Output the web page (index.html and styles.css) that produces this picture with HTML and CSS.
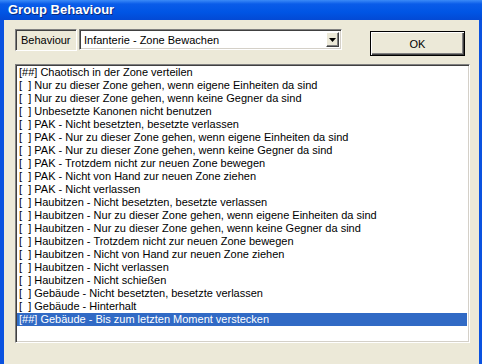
FILE: index.html
```html
<!DOCTYPE html>
<html lang="de">
<head>
  <meta charset="UTF-8">
  <meta name="viewport" content="width=device-width, initial-scale=1.0">
  <title>Group Behaviour</title>
  <link rel="stylesheet" href="styles.css">
</head>
<body>
  <div class="window">
    <div class="titlebar">Group Behaviour</div>
    <div class="client">
      <!-- Auswahl oben -->
      <div class="toprow">
        <span class="label">Behaviour</span>
        <div class="combo">
          <span class="combo-text">Infanterie - Zone Bewachen</span>
          <span class="drop">
            <svg width="7" height="4" viewBox="0 0 7 4"><path d="M0 0h7L3.5 4z" fill="#000"/></svg>
          </span>
        </div>
        <button type="button" class="ok">OK</button>
      </div>

      <!-- Liste der Verhalten -->
      <ul class="list">
        <li>[##] Chaotisch in der Zone verteilen</li>
        <li>[  ] Nur zu dieser Zone gehen, wenn eigene Einheiten da sind</li>
        <li>[  ] Nur zu dieser Zone gehen, wenn keine Gegner da sind</li>
        <li>[  ] Unbesetzte Kanonen nicht benutzen</li>
        <li>[  ] PAK - Nicht besetzten, besetzte verlassen</li>
        <li>[  ] PAK - Nur zu dieser Zone gehen, wenn eigene Einheiten da sind</li>
        <li>[  ] PAK - Nur zu dieser Zone gehen, wenn keine Gegner da sind</li>
        <li>[  ] PAK - Trotzdem nicht zur neuen Zone bewegen</li>
        <li>[  ] PAK - Nicht von Hand zur neuen Zone ziehen</li>
        <li>[  ] PAK - Nicht verlassen</li>
        <li>[  ] Haubitzen - Nicht besetzten, besetzte verlassen</li>
        <li>[  ] Haubitzen - Nur zu dieser Zone gehen, wenn eigene Einheiten da sind</li>
        <li>[  ] Haubitzen - Nur zu dieser Zone gehen, wenn keine Gegner da sind</li>
        <li>[  ] Haubitzen - Trotzdem nicht zur neuen Zone bewegen</li>
        <li>[  ] Haubitzen - Nicht von Hand zur neuen Zone ziehen</li>
        <li>[  ] Haubitzen - Nicht verlassen</li>
        <li>[  ] Haubitzen - Nicht schießen</li>
        <li>[  ] Gebäude - Nicht besetzten, besetzte verlassen</li>
        <li>[  ] Gebäude - Hinterhalt</li>
        <li class="selected">[##] Gebäude - Bis zum letzten Moment verstecken</li>
      </ul>
    </div>
  </div>
</body>
</html>
```

FILE: styles.css
```css
body { margin: 0; font-family: "Liberation Sans", Arial, sans-serif; font-size: 11px; }

.window {
  width: 482px;
  height: 364px;
  background: #0a52e0;
  padding: 0 3px;
  box-sizing: border-box;
  overflow: hidden;
}

.titlebar {
  height: 20px;
  margin: 0 -3px;
  padding-left: 8px;
  color: #fff;
  font-weight: bold;
  font-size: 13px;
  line-height: 19px;
  background: linear-gradient(#3b8af7 0, #0a5ce9 4px, #0055e5 60%, #0349d4 100%);
  text-shadow: 1px 1px 0 #0a2a80;
}

.client {
  background: #ece9d8;
  height: 344px;
  padding: 9px 0 0 11px;
  box-sizing: border-box;
  margin-left: 1px;
}

.toprow { display: flex; align-items: flex-start; height: 35px; }

.label {
  height: 22px;
  width: 62px;
  box-sizing: border-box;
  border: 1px solid;
  border-color: #808080 #fff #fff #808080;
  box-shadow: inset 1px 1px 0 #404040;
  line-height: 20px;
  padding-left: 5px;
}

.combo {
  display: flex;
  align-items: center;
  width: 263px;
  height: 21px;
  margin-left: 2px;
  box-sizing: border-box;
  background: #fff;
  border: 1px solid;
  border-color: #808080 #fff #fff #808080;
  box-shadow: inset 1px 1px 0 #404040, inset -1px -1px 0 #d4d0c8;
  padding: 2px;
}
.combo-text { flex: 1; padding-left: 2px; }

.drop {
  width: 13px;
  height: 15px;
  box-sizing: border-box;
  background: #ece9d8;
  border: 1px solid;
  border-color: #fff #404040 #404040 #fff;
  box-shadow: inset -1px -1px 0 #808080;
  display: flex;
  align-items: center;
  justify-content: center;
}

.ok {
  width: 95px;
  height: 25px;
  margin: 2px 0 0 28px;
  font-family: inherit;
  font-size: 11px;
  background: #ece9d8;
  border: 1px solid #000;
  box-shadow: inset 1px 1px 0 #fff, inset -1px -1px 0 #404040, inset -2px -2px 0 #808080;
  padding: 0;
}

.list {
  list-style: none;
  margin: 0;
  width: 455px;
  height: 279px;
  box-sizing: border-box;
  padding: 1px 0 0;
  background: #fff;
  border: 1px solid;
  border-color: #808080 #fff #fff #808080;
  box-shadow: inset 1px 1px 0 #404040, inset -1px -1px 0 #d4d0c8;
  overflow: hidden;
}
.list li {
  height: 13px;
  line-height: 13px;
  padding-left: 2px;
  margin: 0 2px 0 1px;
  white-space: pre;
  overflow: hidden;
}
.list .selected { background: #316ac5; color: #fff; }
```
